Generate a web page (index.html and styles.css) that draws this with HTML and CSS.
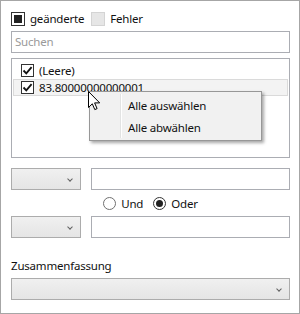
FILE: index.html
```html
<!DOCTYPE html>
<html>
<head>
<meta charset="utf-8">
<link rel="stylesheet" href="styles.css">
</head>
<body>
<div class="panel">
  <div class="flags">
    <div class="chk"><span class="box indet"><span class="fill"></span></span><span>geänderte</span></div>
    <div class="chk"><span class="box dis"></span><span>Fehler</span></div>
  </div>
  <div class="input search">Suchen</div>
  <div class="list">
    <div class="item"><span class="cbox"><svg width="11" height="11" viewBox="0 0 11 11"><path d="M1.5 5.5 L4.3 8.4 L9.6 2.2" fill="none" stroke="#111" stroke-width="1.8"/></svg></span><span>(Leere)</span></div>
    <div class="item hl"><span class="cbox"><svg width="11" height="11" viewBox="0 0 11 11"><path d="M1.5 5.5 L4.3 8.4 L9.6 2.2" fill="none" stroke="#111" stroke-width="1.8"/></svg></span><span>83.80000000000001</span></div>
  </div>
  <div class="filter">
    <div class="combo small"><span class="chev"></span></div>
    <div class="input grow"></div>
  </div>
  <div class="radios">
    <div class="radio"><span class="circle"></span><span>Und</span></div>
    <div class="radio"><span class="circle on"><span class="dot"></span></span><span>Oder</span></div>
  </div>
  <div class="filter">
    <div class="combo small"><span class="chev"></span></div>
    <div class="input grow"></div>
  </div>
  <div class="label">Zusammenfassung</div>
  <div class="combo wide"><span class="chev"></span></div>

  <div class="menu">
    <div class="mitem"><span class="micon"></span><span class="mtext">Alle auswählen</span></div>
    <div class="mitem"><span class="micon"></span><span class="mtext">Alle abwählen</span></div>
  </div>
  <svg class="cursor" width="13" height="20" viewBox="0 0 13 20"><path d="M0.5 0.5 L0.5 16.5 L4.3 12.8 L6.8 18.6 L9.1 17.6 L6.6 11.9 L11.7 11.9 Z" fill="#fff" stroke="#000" stroke-width="1" stroke-linejoin="miter"/></svg>
</div>
</body>
</html>
```

FILE: styles.css
```css
html, body {
  margin: 0;
  padding: 0;
  background: #fff;
}
.panel {
  position: relative;
  width: 300px;
  height: 314px;
  box-sizing: border-box;
  border: 1px solid #a6a6a6;
  padding: 11px 9px 0 10px;
  font-family: "Noto Sans", "Open Sans", sans-serif;
  font-size: 11.5px;
  letter-spacing: -0.2px;
  color: #111;
}
.flags {
  display: flex;
  align-items: center;
  height: 14px;
  gap: 7px;
}
.chk {
  display: flex;
  align-items: center;
  gap: 5px;
  line-height: 14px;
}
.box {
  width: 14px;
  height: 14px;
  box-sizing: border-box;
  display: flex;
  align-items: center;
  justify-content: center;
}
.box.indet {
  border: 1px solid #333;
  background: #fff;
}
.box.indet .fill {
  width: 8px;
  height: 8px;
  background: #222;
}
.box.dis {
  border: 1px solid #d4d4d4;
  background: #e6e6e6;
}
.input {
  height: 22px;
  box-sizing: border-box;
  border: 1px solid #abadb3;
  background: #fff;
}
.search {
  margin-top: 5px;
  color: #9a9a9a;
  line-height: 20px;
  padding-left: 3px;
}
.list {
  margin-top: 5px;
  height: 100px;
  box-sizing: border-box;
  border: 1px solid #abadb3;
  padding: 3px 1px 0 1px;
}
.item {
  height: 17px;
  box-sizing: border-box;
  display: flex;
  align-items: center;
  padding-left: 7px;
  gap: 5px;
  border: 1px solid transparent;
}
.item.hl {
  background: #f3f3f3;
  border-color: #dadada;
}
.cbox {
  width: 13px;
  height: 13px;
  box-sizing: border-box;
  border: 1px solid #333;
  background: #fff;
  display: flex;
  align-items: center;
  justify-content: center;
}
.cbox svg { display: block; }
.filter {
  margin-top: 10px;
  display: flex;
  gap: 10px;
}
.filter + .radios + .filter {
  margin-top: 0;
}
.combo {
  position: relative;
  height: 22px;
  box-sizing: border-box;
  border: 1px solid #acacac;
  background: linear-gradient(#f0f0f0, #e5e5e5);
}
.combo.small {
  width: 70px;
  flex: none;
}
.grow {
  flex: 1;
}
.chev {
  position: absolute;
  right: 8px;
  top: 8px;
  width: 3px;
  height: 3px;
  border-right: 1px solid #606060;
  border-bottom: 1px solid #606060;
  transform: rotate(45deg);
}
.radios {
  height: 26px;
  display: flex;
  align-items: center;
  justify-content: center;
  gap: 10px;
}
.radio {
  display: flex;
  align-items: center;
  gap: 5px;
}
.circle {
  width: 13px;
  height: 13px;
  box-sizing: border-box;
  border-radius: 50%;
  border: 1px solid #707070;
  background: #fff;
  display: flex;
  align-items: center;
  justify-content: center;
}
.circle.on {
  border-color: #333;
}
.dot {
  width: 7px;
  height: 7px;
  border-radius: 50%;
  background: #212121;
}
.label {
  margin-top: 20px;
  line-height: 16px;
  height: 16px;
}
.combo.wide {
  margin-top: 4px;
}
.menu {
  position: absolute;
  left: 88px;
  top: 90px;
  width: 173px;
  box-sizing: border-box;
  border: 1px solid #979797;
  background: #f1f1f1;
  padding: 2px;
  box-shadow: 2px 2px 3px rgba(0, 0, 0, 0.35);
}
.mitem {
  height: 22px;
  display: flex;
  align-items: center;
}
.micon {
  width: 28px;
  height: 22px;
  border-right: 1px solid #e2e3e3;
  box-shadow: 1px 0 0 #fff;
  flex: none;
}
.mtext {
  padding-left: 7px;
}
.cursor {
  position: absolute;
  left: 87px;
  top: 90px;
}
```
